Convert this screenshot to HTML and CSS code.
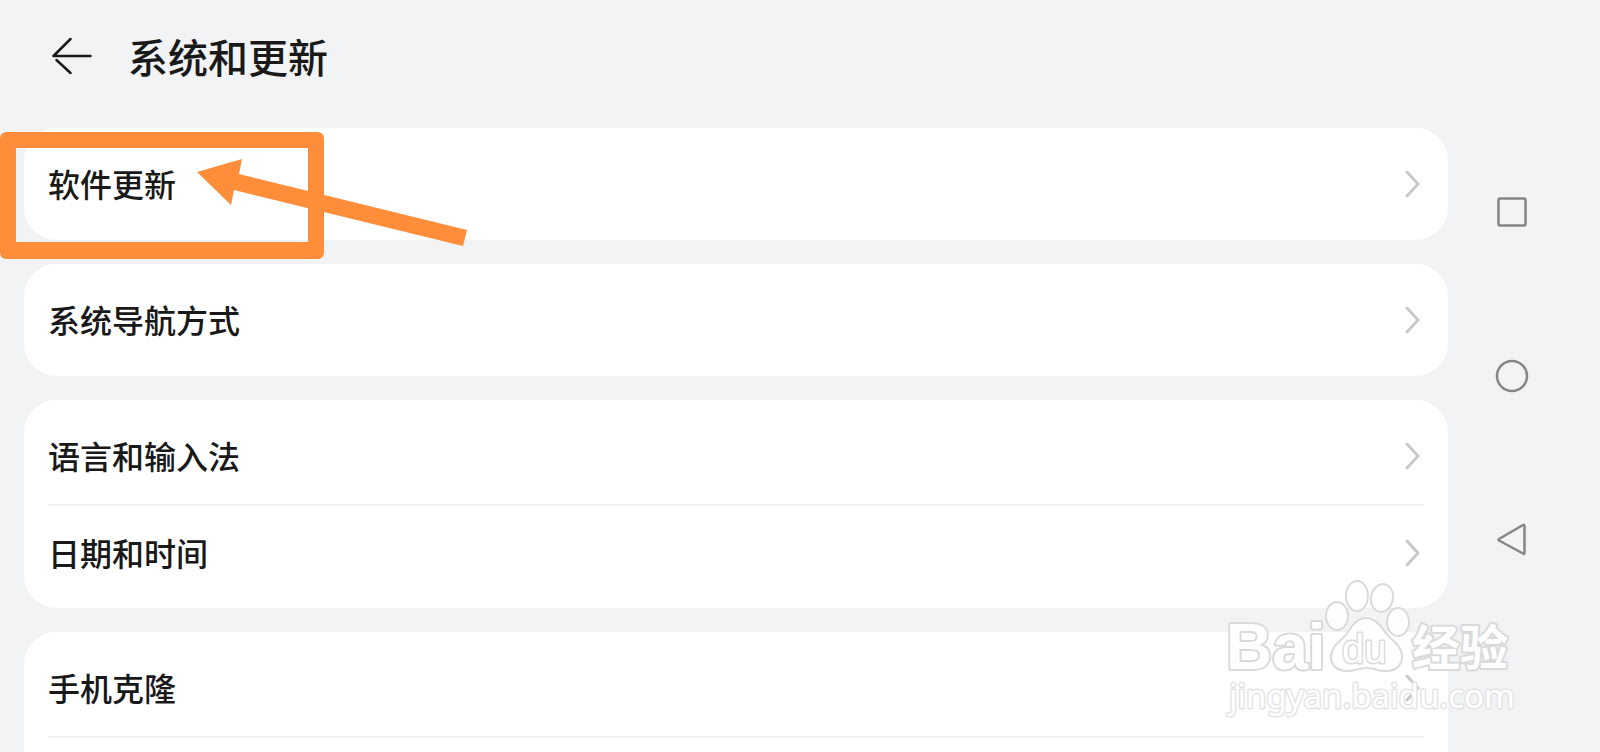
FILE: index.html
```html
<!DOCTYPE html>
<html lang="zh-CN">
<head>
<meta charset="utf-8">
<title>系统和更新</title>
<link rel="stylesheet" href="styles.css">
</head>
<body>
<div class="screen">
  <main class="content">
    <header class="header">
      <button class="back" type="button" aria-label="返回">
        <svg class="back-icon" viewBox="0 0 40 40"><path d="M18.500 3L1.500 20H38.500M4.500 24L18.500 37"/></svg>
      </button>
      <h1 class="title">系统和更新</h1>
    </header>
    <nav class="groups">
      <section class="card">
        <a class="row" href="#update">软件更新<svg class="chevron" viewBox="0 0 24 28"><path d="M7 3L18 15L7 27"/></svg></a>
      </section>
      <section class="card">
        <a class="row" href="#navigation">系统导航方式<svg class="chevron" viewBox="0 0 24 28"><path d="M7 3L18 15L7 27"/></svg></a>
      </section>
      <section class="card">
        <a class="row" href="#language">语言和输入法<svg class="chevron" viewBox="0 0 24 28"><path d="M7 3L18 15L7 27"/></svg></a>
        <a class="row" href="#datetime">日期和时间<svg class="chevron" viewBox="0 0 24 28"><path d="M7 3L18 15L7 27"/></svg></a>
      </section>
      <section class="card">
        <a class="row" href="#clone">手机克隆<svg class="chevron" viewBox="0 0 24 28"><path d="M7 3L18 15L7 27"/></svg></a>
        <div class="row"></div>
      </section>
    </nav>
  </main>
  <aside class="rail">
    <button class="key" type="button" aria-label="最近任务"><svg class="key-icon" viewBox="0 0 36 36"><rect x="4.500" y="4.500" width="27" height="27" rx="1.500"/></svg></button>
    <button class="key" type="button" aria-label="主页"><svg class="key-icon" viewBox="0 0 36 36"><circle cx="18" cy="18" r="15"/></svg></button>
    <button class="key" type="button" aria-label="后退"><svg class="key-icon" viewBox="0 0 36 36"><path d="M5 17L29 3Q30.500 2.500 30.500 4V31Q30.500 32.500 29 31.500L5 18.500Q4 17.700 5 17Z"/></svg></button>
  </aside>
  <svg class="annotation" viewBox="0 0 480 270" aria-hidden="true">
    <path class="mark" fill-rule="evenodd" d="M7 132H317Q324 132 324 139V252Q324 259 317 259H7Q0 259 0 252V139Q0 132 7 132ZM16 148V242H308V148Z"/>
    <path class="mark" d="M197 172L242 159L239 174L467 230L463 246L234 190L231 205Z"/>
  </svg>
  <svg class="watermark" viewBox="0 0 300 150">
    <g class="paw">
      <ellipse cx="117" cy="40" rx="11" ry="14"/>
      <ellipse cx="137" cy="20" rx="11" ry="15"/>
      <ellipse cx="162" cy="22" rx="11" ry="14" transform="rotate(10 162 22)"/>
      <ellipse cx="178" cy="46" rx="11" ry="14"/>
      <path d="M146 42C154 42 160 48 165 56C170 64 182 68 182 81C182 90 175 95 166 95C157 95 155 92 147 92C138 92 136 95 127 95C118 95 111 90 111 81C111 69 123 64 128 56C133 48 138 42 146 42Z"/>
    </g>
    <text class="wm-text wm-latin" x="6" y="93">Bai</text>
    <text class="wm-text wm-du" x="122" y="87">du</text>
    <text class="wm-text wm-cjk" x="192" y="89">经验</text>
    <text class="wm-text wm-url" x="9" y="132">jingyan.baidu.com</text>
  </svg>
</div>
</body>
</html>
```
FILE: styles.css
```css
* {
  box-sizing: border-box;
}

body {
  margin: 0;
  background: #f1f3f5;
  color: #191919;
  font-family: "Noto Sans CJK SC", sans-serif;
}

.screen {
  position: relative;
  display: flex;
  height: 100vh;
  overflow: hidden;
}

.content {
  flex: 1;
  padding-left: 24px;
}

.header {
  display: flex;
  align-items: center;
  gap: 36px;
  height: 112px;
  margin-bottom: 16px;
  padding-left: 28px;
}

.back,
.key {
  display: block;
  padding: 0;
  border: 0;
  background: none;
}

.back-icon {
  display: block;
  width: 40px;
  height: 40px;
  fill: none;
  stroke: #191919;
  stroke-width: 2.5;
  stroke-linecap: round;
  stroke-linejoin: round;
}

.title {
  margin: 0;
  font-size: 40px;
  font-weight: 500;
  line-height: 56px;
}

.groups {
  display: flex;
  flex-direction: column;
  gap: 24px;
}

.card {
  padding: 8px 24px;
  border-radius: 32px;
  background: #fff;
}

.row {
  display: flex;
  align-items: center;
  justify-content: space-between;
  height: 96px;
  padding-bottom: 2px;
  color: inherit;
  font-size: 32px;
  font-weight: 500;
  line-height: 48px;
  text-decoration: none;
}

.row + .row {
  border-top: 2px solid #f1f1f2;
}

.chevron {
  width: 24px;
  height: 28px;
  overflow: visible;
  fill: none;
  stroke: #c8c8c8;
  stroke-width: 3;
  stroke-linecap: round;
  stroke-linejoin: round;
}

.rail {
  display: flex;
  flex-direction: column;
  align-items: center;
  justify-content: center;
  gap: 128px;
  width: 152px;
  padding-right: 24px;
}

.key-icon {
  display: block;
  width: 36px;
  height: 36px;
  fill: none;
  stroke: #858687;
  stroke-width: 2.5;
  stroke-linejoin: round;
}

.annotation {
  position: absolute;
  top: 0;
  left: 0;
  width: 480px;
  height: 270px;
  pointer-events: none;
}

.mark {
  fill: #ff8d3a;
}

.watermark {
  position: absolute;
  right: 80px;
  bottom: 26px;
  width: 300px;
  height: 150px;
  pointer-events: none;
}

.paw,
.wm-text {
  fill: #fff;
  fill-opacity: 0.85;
  stroke: #dadadb;
  stroke-width: 2;
  stroke-linejoin: round;
}

.wm-text {
  fill-opacity: 1;
  stroke-width: 4;
  paint-order: stroke;
}

.wm-latin {
  font-family: "Liberation Sans", sans-serif;
  font-size: 64px;
  font-weight: 700;
}

.wm-du {
  font-family: "Liberation Sans", sans-serif;
  font-size: 40px;
  font-weight: 400;
  stroke-width: 3;
}

.wm-cjk {
  font-size: 48px;
  font-weight: 700;
}

.wm-url {
  font-family: "Noto Sans", sans-serif;
  font-size: 33px;
  stroke: #e4e4e5;
  stroke-width: 3;
}
```
